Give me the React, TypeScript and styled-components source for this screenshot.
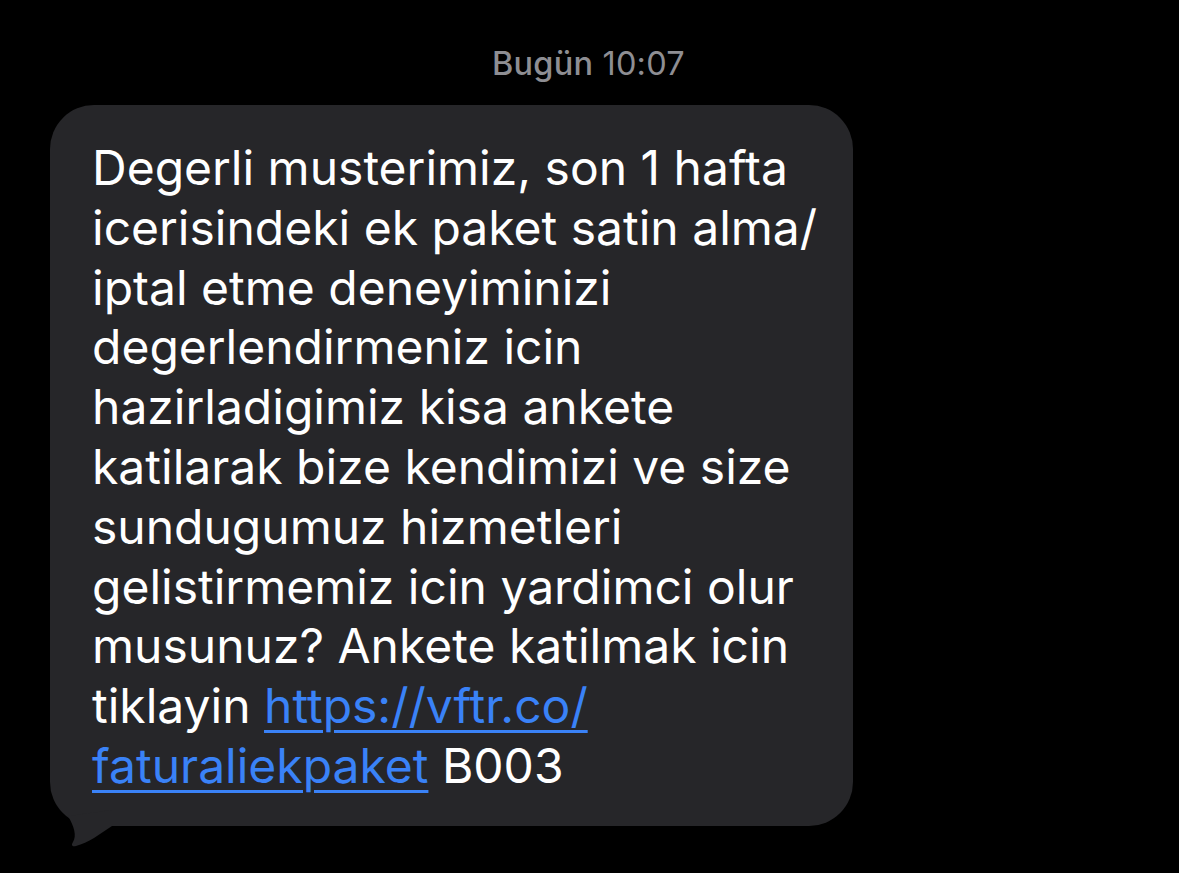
import React from "react";
import styled, { createGlobalStyle } from "styled-components";

const Global = createGlobalStyle`
  html, body {
    margin: 0;
    background: #000;
  }
  body {
    font-family: Inter, "Noto Sans", "Liberation Sans", sans-serif;
    -webkit-font-smoothing: antialiased;
  }
`;

const Screen = styled.div`
  width: 1179px;
  height: 873px;
  overflow: hidden;
  background: #000;
  display: flex;
  flex-direction: column;
`;

const Stamp = styled.div`
  margin-top: 41px;
  margin-left: 492px;
  font-size: 32.5px;
  line-height: 46px;
  color: #8e8e93;
  letter-spacing: 0.2px;

  b {
    font-weight: 500;
  }
`;

const Row = styled.div`
  margin-top: 18px;
  padding-left: 50px;
  display: flex;
`;

const Bubble = styled.div`
  position: relative;
  width: 803px;
  box-sizing: border-box;
  padding: 33px 20px 30px 42px;
  background: #262629;
  border-radius: 44px;
  color: #fff;
  font-size: 48px;
  line-height: 59.8px;
  letter-spacing: 0;
`;

const Tail = styled.svg`
  position: absolute;
  left: 0;
  bottom: -24px;
  width: 80px;
  height: 80px;
`;

const Link = styled.a`
  color: #3a82f7;
  text-decoration: underline;
  text-decoration-thickness: 3px;
  text-underline-offset: 7px;
`;

export default function App() {
  return (
    <Screen>
      <Global />
      <Stamp>
        <b>Bugün</b> 10:07
      </Stamp>
      <Row>
        <Bubble>
          Degerli musterimiz, son 1 hafta
          <br />
          icerisindeki ek paket satin alma/
          <br />
          iptal etme deneyiminizi
          <br />
          degerlendirmeniz icin
          <br />
          hazirladigimiz kisa ankete
          <br />
          katilarak bize kendimizi ve size
          <br />
          sundugumuz hizmetleri
          <br />
          gelistirmemiz icin yardimci olur
          <br />
          musunuz? Ankete katilmak icin
          <br />
          tiklayin <Link href="#">https://vftr.co/</Link>
          <br />
          <Link href="#">faturaliekpaket</Link> B003
          <Tail viewBox="0 0 80 80">
            <path
              d="M18 46 C24 56 27 66 23 72 C21 75 22 77 26 76 C38 73 50 64 62 56 L62 40 Z"
              fill="#262629"
            />
          </Tail>
        </Bubble>
      </Row>
    </Screen>
  );
}
